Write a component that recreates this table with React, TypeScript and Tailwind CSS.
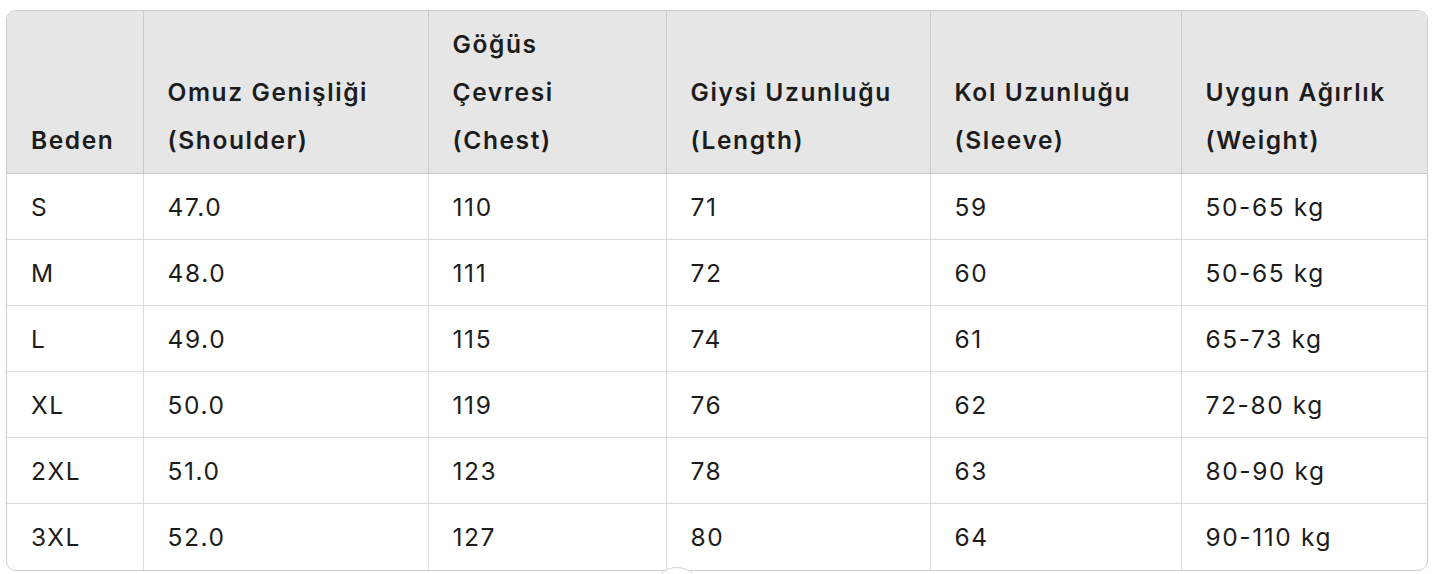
import React from "react";

const headers = [
  ["Beden"],
  ["Omuz Genişliği", "(Shoulder)"],
  ["Göğüs", "Çevresi", "(Chest)"],
  ["Giysi Uzunluğu", "(Length)"],
  ["Kol Uzunluğu", "(Sleeve)"],
  ["Uygun Ağırlık", "(Weight)"],
];

const rows = [
  ["S", "47.0", "110", "71", "59", "50-65 kg"],
  ["M", "48.0", "111", "72", "60", "50-65 kg"],
  ["L", "49.0", "115", "74", "61", "65-73 kg"],
  ["XL", "50.0", "119", "76", "62", "72-80 kg"],
  ["2XL", "51.0", "123", "78", "63", "80-90 kg"],
  ["3XL", "52.0", "127", "80", "64", "90-110 kg"],
];

const widths = ["w-[136px]", "w-[285px]", "w-[238px]", "w-[264px]", "w-[251px]", "w-[246px]"];

export default function App() {
  return (
    <div
      className="relative w-[1440px] h-[574px] bg-white overflow-hidden text-[#1c1c1c]"
      style={{ fontFamily: "Inter, 'Noto Sans', sans-serif" }}
    >
      <div className="ml-[6px] mt-[10px] w-[1422px] border border-[#cdcdcd] rounded-[10px] overflow-hidden">
        <table className="w-full border-collapse table-fixed text-[24.5px] tracking-[1.6px] leading-[48px]">
          <thead>
            <tr className="bg-[#e6e6e6]">
              {headers.map((h, i) => (
                <th
                  key={i}
                  className={`${widths[i]} align-bottom text-left font-semibold pl-[24px] pr-1 pt-[9px] pb-[9px] border-b border-[#c9c9c9] ${
                    i < 5 ? "border-r" : ""
                  }`}
                >
                  {h.map((l, j) => (
                    <div key={j} className="whitespace-nowrap">{l}</div>
                  ))}
                </th>
              ))}
            </tr>
          </thead>
          <tbody>
            {rows.map((r, ri) => (
              <tr key={ri}>
                {r.map((c, ci) => (
                  <td
                    key={ci}
                    className={`pl-[24px] pr-1 h-[66px] py-0 align-middle whitespace-nowrap border-[#dcdcdc] ${
                      ci < 5 ? "border-r" : ""
                    } ${ri < 5 ? "border-b" : ""}`}
                  >
                    {c}
                  </td>
                ))}
              </tr>
            ))}
          </tbody>
        </table>
      </div>
      <div className="absolute left-[654px] top-[567px] w-[46px] h-[46px] rounded-full bg-white border border-[#d6d6d6]" />
    </div>
  );
}
